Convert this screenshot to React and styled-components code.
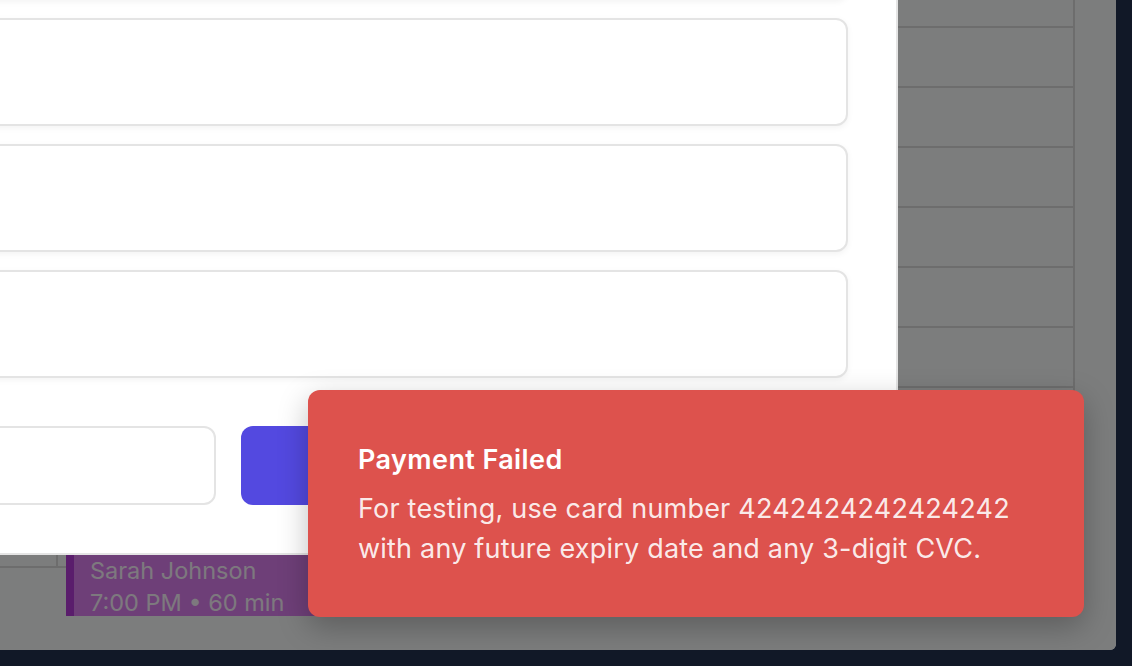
import React from 'react';
import styled, { createGlobalStyle } from 'styled-components';

const GlobalStyle = createGlobalStyle`
  html, body {
    margin: 0;
    padding: 0;
    background: #111827;
    font-family: Inter, "Noto Sans", "Liberation Sans", sans-serif;
  }
  * { box-sizing: border-box; }
`;

const Screen = styled.div`
  width: 1132px;
  height: 666px;
  background: #111827;
`;

const AppArea = styled.div`
  position: relative;
  width: 1116px;
  height: 650px;
  overflow: hidden;
  background: #f9fafb;
  border-bottom-right-radius: 6px;
`;

/* calendar behind the dialog, scrolled so the evening hours show */
const Calendar = styled.div`
  display: grid;
  grid-template-columns: 58px 1fr 41px;
  margin-top: -32px;
`;

const Column = styled.div`
  position: relative;
  border-right: ${p => (p.$edge ? '2px solid #dadada' : 'none')};
`;

const HourRow = styled.div`
  height: 60px;
  border-bottom: 2px solid #dadada;
`;

const EventCard = styled.div`
  position: absolute;
  left: 8px;
  top: 572px;
  width: 300px;
  height: 76px;
  padding: 15px 16px 0 16px;
  background: #dc7ef0;
  border-left: 8px solid #b43ad8;
  color: #fbf2fd;
  font-size: 23.5px;
  line-height: 32px;
`;

const Overlay = styled.div`
  position: absolute;
  inset: 0;
  background: rgba(0, 0, 0, 0.5);
`;

/* dialog, scrolled to its end */
const Modal = styled.div`
  position: absolute;
  left: -400px;
  top: 0;
  width: 1298px;
  height: 555px;
  display: flex;
  flex-direction: column;
  justify-content: flex-end;
  gap: 18px;
  padding: 0 48px 48px 48px;
  background: #ffffff;
  border-right: 2px solid #e4e4e4;
  border-bottom: 2px solid #e4e4e4;
  overflow: hidden;
`;

const Field = styled.div`
  flex: 0 0 108px;
  border: 2px solid #e4e4e4;
  border-radius: 12px;
  background: #ffffff;
  box-shadow: 0 2px 6px rgba(0, 0, 0, 0.05);
`;

const Actions = styled.div`
  flex: 0 0 79px;
  display: flex;
  gap: 25px;
  margin-top: 30px;
`;

const OutlineButton = styled.button`
  flex: 0 0 568px;
  border: 2px solid #e4e4e4;
  border-radius: 12px;
  background: #ffffff;
`;

const PrimaryButton = styled.button`
  flex: 1;
  border: none;
  border-radius: 12px;
  background: #5349e0;
`;

const Toast = styled.div`
  position: absolute;
  right: 32px;
  bottom: 33px;
  width: 776px;
  padding: 52px 48px 48px 50px;
  background: #dd524d;
  border-radius: 12px;
  box-shadow: 0 10px 30px rgba(0, 0, 0, 0.25);
`;

const ToastTitle = styled.div`
  color: #ffffff;
  font-size: 27px;
  font-weight: 600;
  letter-spacing: 0.4px;
  line-height: 36px;
  margin-bottom: 11px;
`;

const ToastText = styled.div`
  color: rgba(255, 255, 255, 0.9);
  font-size: 27px;
  letter-spacing: 0.2px;
  line-height: 40px;
`;

const hours = Array.from({ length: 10 });

export default function App() {
  return (
    <Screen>
      <GlobalStyle />
      <AppArea>
        <Calendar>
          <Column $edge>
            {hours.map((_, i) => <HourRow key={i} />)}
          </Column>
          <Column $edge>
            {hours.map((_, i) => <HourRow key={i} />)}
            <EventCard>
              <div>Sarah Johnson</div>
              <div>7:00 PM • 60 min</div>
            </EventCard>
          </Column>
          <Column />
        </Calendar>
        <Overlay />
        <Modal>
          <Field />
          <Field />
          <Field />
          <Field />
          <Field />
          <Actions>
            <OutlineButton />
            <PrimaryButton />
          </Actions>
        </Modal>
        <Toast>
          <ToastTitle>Payment Failed</ToastTitle>
          <ToastText>
            For testing, use card number 4242424242424242 with any future expiry date and any 3-digit CVC.
          </ToastText>
        </Toast>
      </AppArea>
    </Screen>
  );
}
